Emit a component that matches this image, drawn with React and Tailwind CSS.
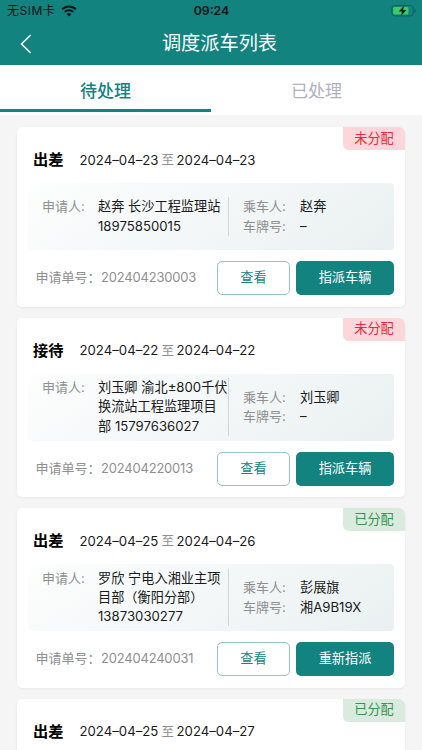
import { useState } from "react";

const STATUS = {
  pending: {
    label: "未分配",
    action: "指派车辆",
    className: "bg-[#fcd6da] text-[#e8293a]",
  },
  assigned: {
    label: "已分配",
    action: "重新指派",
    className: "bg-[#d9ebde] text-[#3a9253]",
  },
};

const orders = [
  {
    id: "202404230003",
    type: "出差",
    start: "2024–04–23",
    end: "2024–04–23",
    applicant: ["赵奔 长沙工程监理站", "18975850015"],
    passenger: "赵奔",
    plate: "–",
    status: "pending",
  },
  {
    id: "202404220013",
    type: "接待",
    start: "2024–04–22",
    end: "2024–04–22",
    applicant: ["刘玉卿 渝北±800千伏", "换流站工程监理项目", "部 15797636027"],
    passenger: "刘玉卿",
    plate: "–",
    status: "pending",
  },
  {
    id: "202404240031",
    type: "出差",
    start: "2024–04–25",
    end: "2024–04–26",
    applicant: ["罗欣 宁电入湘业主项", "目部（衡阳分部）", "13873030277"],
    passenger: "彭展旗",
    plate: "湘A9B19X",
    status: "assigned",
  },
  {
    id: "202404240030",
    type: "出差",
    start: "2024–04–25",
    end: "2024–04–27",
    status: "assigned",
  },
];

const tabs = [
  { key: "todo", label: "待处理" },
  { key: "done", label: "已处理" },
];

const WifiIcon = () => (
  <svg width="16" height="12" viewBox="0 0 16 12" fill="none" stroke="#0a1514">
    <path d="M1.1 4.3a9.8 9.8 0 0 1 13.8 0" strokeWidth="2.1" />
    <path d="M3.7 6.9a6.1 6.1 0 0 1 8.6 0" strokeWidth="2" />
    <path d="M8 11.4 5.7 9a3.3 3.3 0 0 1 4.6 0Z" fill="#0a1514" stroke="none" />
  </svg>
);

const BatteryIcon = () => (
  <svg width="26" height="14" viewBox="0 0 26 14">
    <rect x="0.8" y="1.5" width="21.4" height="10.4" rx="2.8" fill="none" stroke="#0e5f5d" strokeWidth="1" />
    <rect x="2.2" y="2.9" width="15.2" height="7.6" rx="1.4" fill="#3ccb62" />
    <path d="M23.6 5v3.6c.9-.3 1.3-1 1.3-1.8s-.4-1.5-1.3-1.8Z" fill="#0e5f5d" />
    <path d="M13.2 1.4 7.8 7.4h3.2L10 12l5.400-6h-3.400Z" fill="#071211" stroke="#138380" strokeWidth="0.3" />
  </svg>
);

const StatusBar = () => (
  <div className="grid h-[22px] grid-cols-3 items-center pl-[7px] pr-[5px] text-[#0a1514]">
    <div className="flex items-center gap-[6px] text-[12px]">
      <span className="tracking-[0.5px]">无SIM卡</span>
      <WifiIcon />
    </div>
    <div className="pr-[1px] text-center text-[12.3px] font-semibold">09:24</div>
    <div className="flex justify-end">
      <BatteryIcon />
    </div>
  </div>
);

const OrderCard = ({ order }) => {
  const status = STATUS[order.status];

  return (
    <div className="relative h-[179.5px] shrink-0 rounded-[5px] bg-white px-[11px] shadow-[0_1px_3px_rgba(0,0,0,0.06)]">
      <span
        className={`absolute right-0 top-0 flex h-[23px] w-[62px] items-center justify-center rounded-bl-[6px] rounded-tr-[6px] text-[13.2px] ${status.className}`}
      >
        {status.label}
      </span>

      <div className="flex h-[56px] items-center pl-[5px] pt-[11px]">
        <span className="w-[46.5px] text-[15.2px] font-bold text-black">{order.type}</span>
        <span className="w-[79px] whitespace-nowrap text-[13.2px]">{order.start}</span>
        <span className="ml-[3px] mr-[2.5px] text-[12.5px] text-[#8f8f8f]">至</span>
        <span className="whitespace-nowrap text-[13.2px]">{order.end}</span>
      </div>

      {order.applicant && (
        <>
          <div className="flex h-[67px] items-center rounded-[4px] bg-[linear-gradient(145deg,#fdfefe,#eaf0f1)] pl-[14px] text-[13.2px] leading-[19.3px]">
            <div className="flex">
              <span className="w-[56px] text-[13px] text-[#8f8f8f]">申请人:</span>
              <div className="w-[130px] whitespace-nowrap">
                {order.applicant.map((line) => (
                  <p key={line}>{line}</p>
                ))}
              </div>
              <div className="w-px bg-[#d2d6d7]" />
            </div>
            <div className="ml-[14px]">
              <div className="flex">
                <span className="w-[57px] text-[13px] text-[#8f8f8f]">乘车人:</span>
                <span>{order.passenger}</span>
              </div>
              <div className="flex">
                <span className="w-[57px] text-[13px] text-[#8f8f8f]">车牌号:</span>
                <span>{order.plate}</span>
              </div>
            </div>
          </div>

          <div className="mt-[11px] flex h-[34px] items-center pl-[7.5px] text-[13.2px]">
            <div className="flex flex-1 whitespace-nowrap text-[#8f8f8f]">
              <span className="w-[65.5px] text-[13px]">申请单号：</span>
              <span className="text-[13px] tracking-[-0.2px]">{order.id}</span>
            </div>
            <button
              type="button"
              className="h-[34px] w-[73px] rounded-[5px] border border-[#92c5c3] text-[#138380]"
            >
              查看
            </button>
            <button
              type="button"
              className="ml-[6px] h-[34px] w-[98px] rounded-[5px] bg-[#138380] text-white"
            >
              {status.action}
            </button>
          </div>
        </>
      )}
    </div>
  );
};

const App = () => {
  const [activeTab, setActiveTab] = useState("todo");

  return (
    <div className="flex h-[750px] w-[422px] flex-col overflow-hidden bg-[#f5f5f5] font-['Inter','Noto_Sans_CJK_SC',sans-serif] text-[#1a1a1a]">
      <header className="h-[65px] shrink-0 bg-[#138380]">
        <StatusBar />
        <div className="grid h-[43px] grid-cols-[40px_1fr_40px] items-center pl-[20px] text-white">
          <svg width="12" height="20" viewBox="0 0 12 20" fill="none" stroke="currentColor" strokeWidth="1.5">
            <path d="M10.7 1 1.5 10l9.2 9" />
          </svg>
          <h1 className="pr-[3px] text-center text-[19.2px]">调度派车列表</h1>
        </div>
      </header>

      <nav className="flex h-[50px] shrink-0 bg-white">
        {tabs.map((tab) => (
          <button
            key={tab.key}
            type="button"
            onClick={() => setActiveTab(tab.key)}
            className={`mb-[3px] flex flex-1 items-center justify-center border-b-3 pt-[9px] text-[17px] ${
              activeTab === tab.key
                ? "border-[#138380] font-medium text-[#138380]"
                : "border-transparent text-[#b0b0c0]"
            }`}
          >
            {tab.label}
          </button>
        ))}
      </nav>

      <main className="flex min-h-0 flex-1 flex-col gap-[11px] overflow-y-auto px-[17px] pt-[12px] [scrollbar-width:none]">
        {orders.map((order) => (
          <OrderCard key={order.id} order={order} />
        ))}
      </main>
    </div>
  );
};

export default App;
